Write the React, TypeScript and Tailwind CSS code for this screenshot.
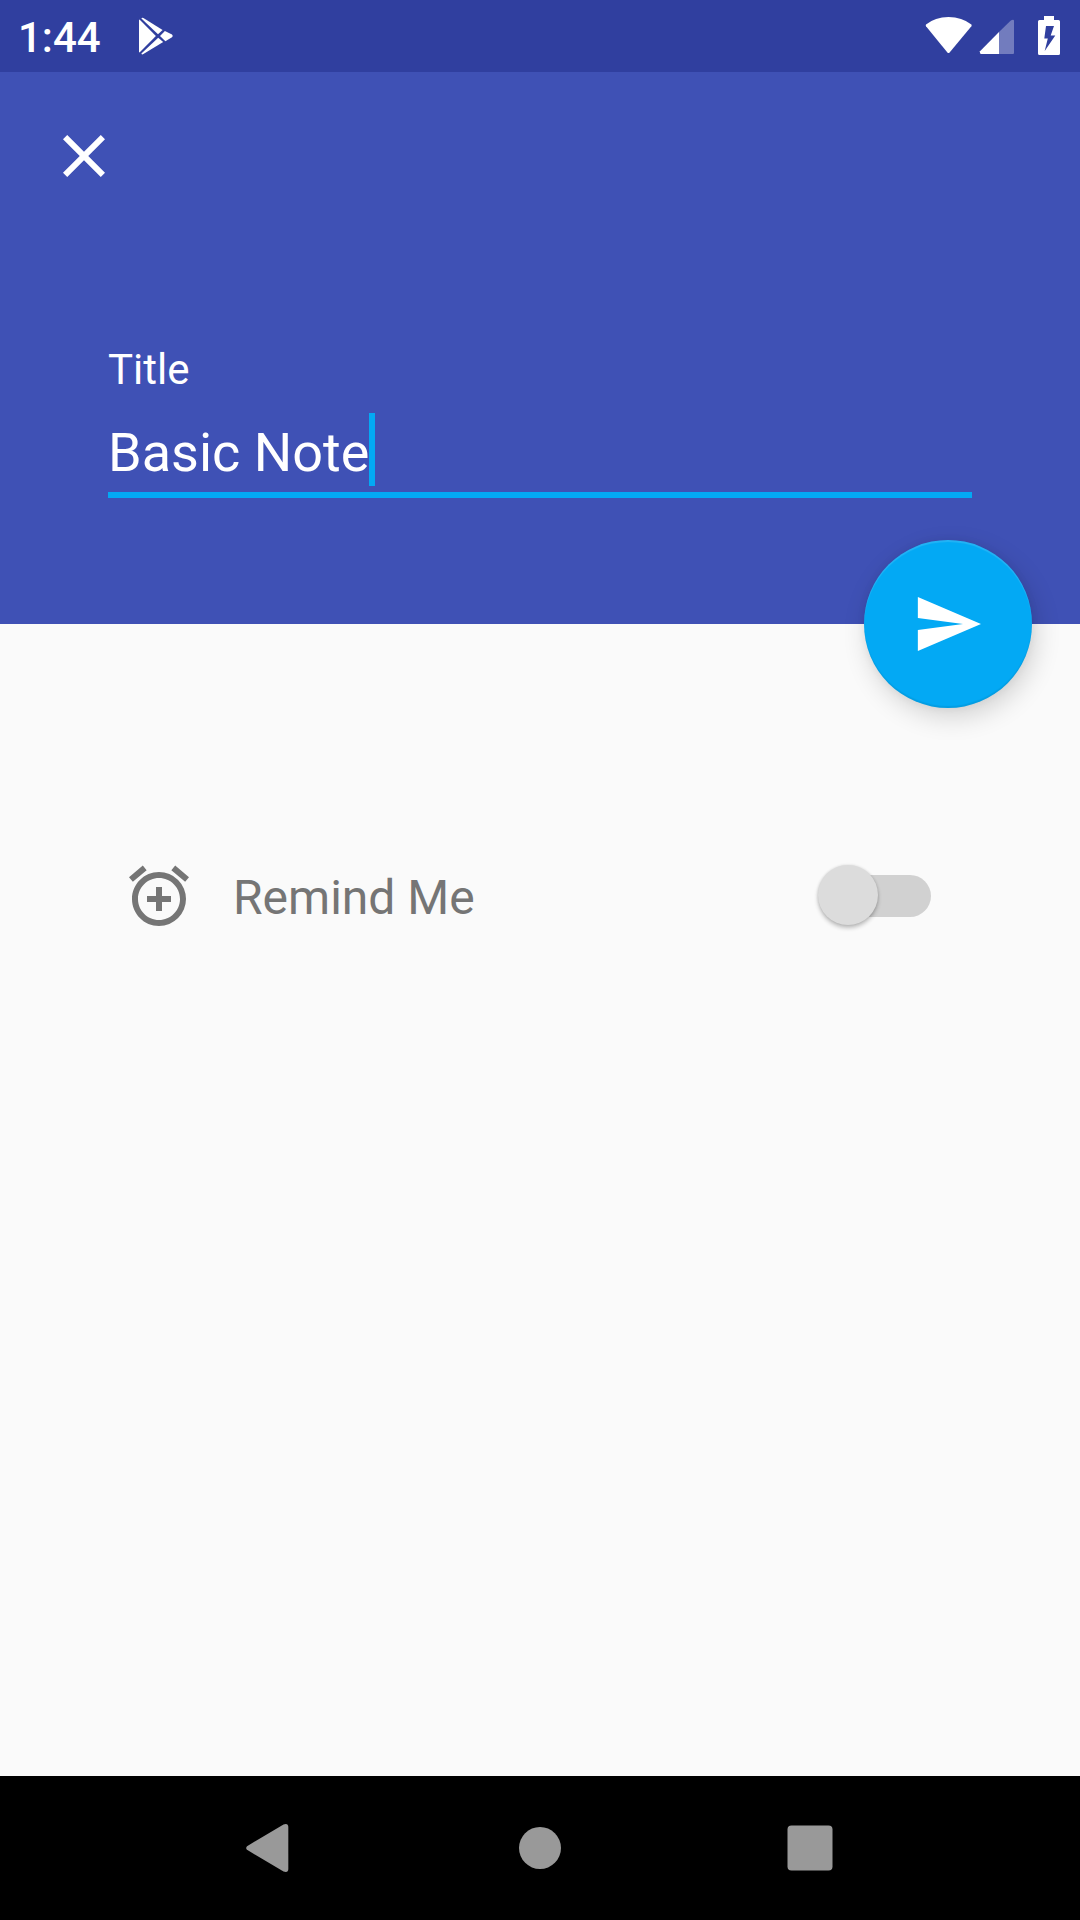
function StatusBar() {
  return (
    <div className="flex h-[72px] items-center justify-between bg-[#303F9F]">
      <div className="flex h-full items-center pl-[18px]">
        <span className="w-[121px] pt-[2px] text-[42px] leading-[49px] font-medium">1:44</span>
        <svg className="h-[72px] w-[36px]" viewBox="139 0 36 72" fill="currentColor">
          <path d="M139 20.2Q139 19 140 20L155.900 35.900L140 52Q139 53 139 51.700Z" />
          <path d="M141.400 18.600Q141.800 17.200 143.400 18L162.600 30L158 34.200Z" />
          <path d="M141.400 53.500Q141.800 54.900 143.400 54.100L163.200 42.100L158.200 37.700Z" />
          <path d="M164.900 31L172 34.400Q173.600 35.800 172 37.200L165.400 41.200L160 35.900Z" />
        </svg>
      </div>
      <svg className="h-[72px] w-[160px]" viewBox="920 0 160 72" fill="currentColor">
        <path d="M926 24.6Q935 17 948.5 17Q962 17 971.4 24.6Q972 25.4 971.4 26.2L949.6 52.4Q948.5 53.4 947.4 52.4L926 26.2Q925.4 25.4 926 24.6Z" />
        <path d="M1014 21V53Q1014 54 1013 54H999V32L1010.8 20.4Q1014 18.6 1014 21Z" opacity="0.32" />
        <path d="M999 32V54H981Q979.4 53.6 980 51.2Z" />
        <path
          fillRule="evenodd"
          d="M1044 16H1054V20H1058.5Q1060 20 1060 21.5V53.5Q1060 55 1058.5 55H1039.500Q1038 55 1038 53.500V21.5Q1038 20 1039.500 20H1044ZM1046 26L1044.300 38.500H1047.800L1044.700 51L1055.300 35.500H1050.700L1054 26Z"
        />
      </svg>
    </div>
  );
}

function Header() {
  return (
    <header className="relative flex h-[552px] flex-col bg-[#3F51B5] pt-[48px]">
      <button className="ml-[48px] size-[72px]" aria-label="Close">
        <svg viewBox="0 0 24 24" fill="currentColor">
          <path d="M19 6.410 17.590 5 12 10.590 6.410 5 5 6.410 10.590 12 5 17.590 6.410 19 12 13.410 17.590 19 19 17.590 13.410 12z" />
        </svg>
      </button>
      <div className="mx-[108px] mt-[153px] flex flex-col">
        <label className="text-[42px] leading-[50px]">Title</label>
        <div className="mt-[18px] flex h-[85px] items-start border-b-[6px] border-[#03A9F4]">
          <span className="w-[261px] whitespace-nowrap text-[54px] leading-[80px]">Basic Note</span>
          <span className="h-[73px] w-[6px] bg-[#03A9F4]" />
        </div>
      </div>
      <button
        className="absolute right-[48px] bottom-[-84px] flex size-[168px] items-center justify-center rounded-full bg-[#03A9F4] shadow-[4px_9px_26px_rgba(0,0,0,0.16),0_0_8px_rgba(0,0,0,0.06),inset_0_2px_1px_rgba(255,255,255,0.13),inset_0_-2px_1px_rgba(0,0,0,0.07)]"
        aria-label="Send"
      >
        <svg className="size-[72px]" viewBox="0 0 24 24" fill="currentColor">
          <path d="M1.950 21 23 12 1.950 3V10L17 12 1.950 14Z" />
        </svg>
      </button>
    </header>
  );
}

function Reminder() {
  return (
    <div className="mt-[236px] flex h-[72px] items-center pr-[149px] pl-[123px] text-[#757575]">
      <svg className="size-[72px]" viewBox="0 0 24 24" fill="currentColor">
        <path d="M7.880 3.390 6.600 1.860 2 5.710l1.290 1.530 4.590-3.850zM22 5.720l-4.600-3.860-1.290 1.530 4.600 3.860L22 5.720zM12 4c-4.970 0-9 4.030-9 9s4.020 9 9 9a9 9 0 0 0 0-18zm0 16c-3.870 0-7-3.130-7-7s3.130-7 7-7 7 3.130 7 7-3.130 7-7 7zm1-11h-2v3H8v2h3v3h2v-3h3v-2h-3V9z" />
      </svg>
      <span className="ml-[38px] pt-[4px] text-[48px] leading-[56px]">Remind Me</span>
      <div className="ml-auto flex h-[60px] w-[113px] items-center" role="switch" aria-checked="false">
        <div className="z-10 mb-[2px] size-[60px] shrink-0 rounded-full bg-[#DCDCDC] shadow-[0_3px_4px_rgba(0,0,0,0.24),0_0_3px_rgba(0,0,0,0.12)]" />
        <div className="-ml-[45px] h-[42px] w-[98px] shrink-0 rounded-full bg-[#D1D1D1]" />
      </div>
    </div>
  );
}

function NavigationBar() {
  return (
    <nav className="flex h-[144px] items-center justify-between bg-black px-[246px] text-[#999999]">
      <svg className="size-[48px]" viewBox="0 0 48 48" fill="currentColor">
        <path d="M1 22.200L37.500 0.500Q42.300 -1 42.300 3V45Q42.300 49 37.500 47.500L1 25.800Q-0.600 24 1 22.200Z" />
      </svg>
      <div className="size-[42px] rounded-full bg-[#999999]" />
      <svg className="size-[48px]" viewBox="0 0 48 48" fill="currentColor">
        <rect x="1.5" y="1.5" width="45" height="45" rx="4" />
      </svg>
    </nav>
  );
}

export default function App() {
  return (
    <div className="flex h-[1920px] w-[1080px] flex-col overflow-hidden bg-[#FAFAFA] font-['Roboto',sans-serif] text-white">
      <StatusBar />
      <Header />
      <main className="flex-1">
        <Reminder />
      </main>
      <NavigationBar />
    </div>
  );
}
